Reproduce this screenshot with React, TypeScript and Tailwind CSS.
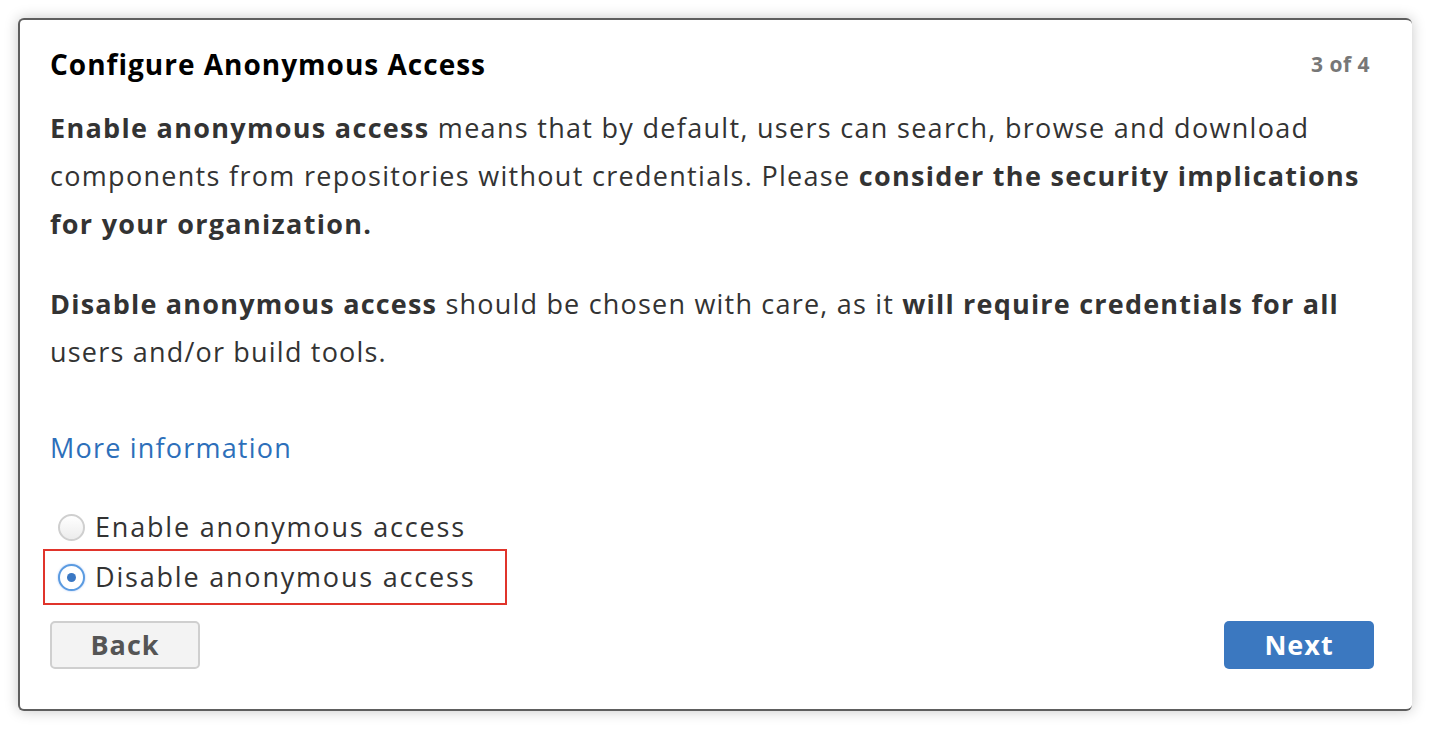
import React, { useState } from "react";

const font = { fontFamily: "'Open Sans', Lato, Arial, sans-serif" };

function Radio({ checked, label, onClick }: { checked: boolean; label: string; onClick: () => void }) {
    return (
        <label onClick={onClick} className="flex items-center gap-[10px] cursor-pointer h-[44px]">
            {checked ? (
                <span className="w-[27px] h-[27px] rounded-full border-2 border-[#5b9be0] bg-white flex items-center justify-center shadow-[0_0_2px_rgba(59,130,246,0.5)]">
                    <span className="w-[9px] h-[9px] rounded-full bg-[#3b78c4]"></span>
                </span>
            ) : (
                <span className="w-[27px] h-[27px] rounded-full border-2 border-[#cfcfcf] bg-gradient-to-b from-white to-[#ececec]"></span>
            )}
            <span className="text-[27px] tracking-[1.8px] text-[#333]">{label}</span>
        </label>
    );
}

export default function App() {
    const [choice, setChoice] = useState<"enable" | "disable">("disable");

    return (
        <div className="w-full h-[730px] bg-white pt-[18px] pl-[18px]" style={font}>
            <div className="w-[1394px] h-[693px] bg-white rounded-md border-l-2 border-t-2 border-b-2 border-[#5e5e5e] shadow-[0_0_14px_rgba(0,0,0,0.22)] pl-[30px] pr-[38px] pt-[26px] flex flex-col">
                <div className="flex justify-between items-start">
                    <h1 className="text-[28px] tracking-[1px] font-bold text-black leading-[36px]">Configure Anonymous Access</h1>
                    <span className="text-[21px] tracking-[0.5px] font-bold text-[#777] leading-[36px] pr-[4px]">3 of 4</span>
                </div>

                <p className="mt-[22px] text-[27px] tracking-[1.3px] leading-[48px] text-[#333]">
                    <b>Enable anonymous access</b> means that by default, users can search, browse and download<br />
                    components from repositories without credentials. Please <b>consider the security implications</b><br />
                    <b>for your organization.</b>
                </p>

                <p className="mt-[32px] text-[27px] tracking-[1.2px] leading-[48px] text-[#333]">
                    <b>Disable anonymous access</b> should be chosen with care, as it <b>will require credentials for all</b><br />
                    users and/or build tools.
                </p>

                <a href="#" className="mt-[48px] text-[27px] tracking-[1.2px] leading-[48px] text-[#2d6fba] self-start">More information</a>

                <div className="mt-[28px] flex flex-col">
                    <div className="pl-[8px] pt-[5px]">
                        <Radio checked={choice === "enable"} label="Enable anonymous access" onClick={() => setChoice("enable")} />
                    </div>
                    <div className="-ml-[7px] w-[464px] h-[56px] border-2 border-[#e0342b] pl-[13px] flex items-center">
                        <Radio checked={choice === "disable"} label="Disable anonymous access" onClick={() => setChoice("disable")} />
                    </div>
                </div>

                <div className="mt-[16px] flex justify-between">
                    <button className="w-[150px] h-[48px] rounded-[5px] border-2 border-[#cfcfcf] bg-[#f3f3f3] text-[27px] tracking-[1px] font-bold text-[#555]">Back</button>
                    <button className="w-[150px] h-[48px] rounded-[5px] bg-[#3b78c0] text-[27px] tracking-[1px] font-bold text-white">Next</button>
                </div>
            </div>
        </div>
    );
}
